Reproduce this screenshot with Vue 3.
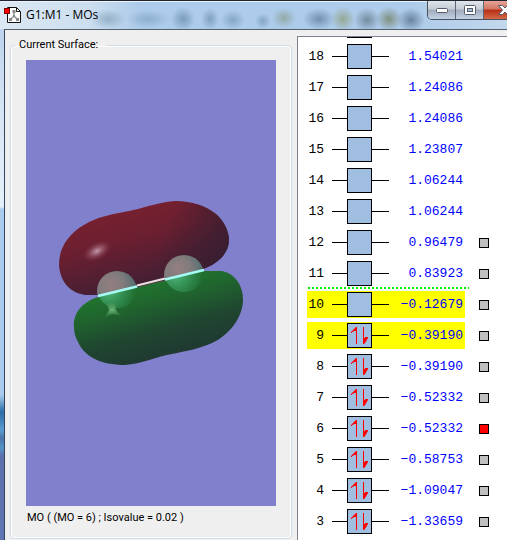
<script setup>
import { ref } from "vue";

const energies = {
  18: "1.54021",
  17: "1.24086",
  16: "1.24086",
  15: "1.23807",
  14: "1.06244",
  13: "1.06244",
  12: "0.96479",
  11: "0.83923",
  10: "−0.12679",
  9: "−0.39190",
  8: "−0.39190",
  7: "−0.52332",
  6: "−0.52332",
  5: "−0.58753",
  4: "−1.09047",
  3: "−1.33659",
};

const HOMO = 9;
const LUMO = 10;

// Highest orbital first
const orbitals = Object.keys(energies)
  .map(Number)
  .sort((a, b) => b - a)
  .map((number) => ({
    number,
    energy: energies[number],
    occupied: number <= HOMO,
    frontier: number === HOMO || number === LUMO,
    hasSurface: number <= 12,
  }));

const surfaces = ref([6]);
</script>

<template>
  <div class="window">
    <header class="title-bar">
      <svg class="app-icon" width="18" height="18" viewBox="0 0 18 18">
        <path d="M3.500 1.500H12.500L16.500 5.500V16.500H3.500Z" fill="#fff" stroke="#111" />
        <path d="M12.500 1.500V5.500H16" fill="none" stroke="#111" />
        <path d="M10 6V10L7 13M10 10L13 13" fill="none" stroke="#999" stroke-width="1.500" />
        <path d="M8.500 4h3v3h-3zM9 9h2v2H9zM5 12h3v3H5zM12 12h3v3h-3z" fill="#888" />
        <rect x="0.500" y="2.500" width="5" height="5" fill="#f00" stroke="#700" />
      </svg>
      <h1>G1:M1 - MOs</h1>
      <div class="window-buttons">
        <button type="button" aria-label="Minimize">
          <svg width="14" height="14" viewBox="0 0 14 14">
            <rect x="1.500" y="5.500" width="11" height="4" rx="1" fill="#fff" stroke="#555b6b" />
          </svg>
        </button>
        <button type="button" aria-label="Maximize">
          <svg width="14" height="14" viewBox="0 0 14 14">
            <rect x="1.500" y="2.500" width="11" height="9" rx="1" fill="#fff" stroke="#555b6b" />
            <rect x="4.500" y="5.500" width="5" height="3" fill="#a9c0da" stroke="#555b6b" />
          </svg>
        </button>
        <button type="button" class="close" aria-label="Close">
          <svg width="14" height="14" viewBox="0 0 14 14">
            <path
              d="M0.500 2.500H4.500L7 5L9.500 2.500H13.500L9.500 7L13.500 11.500H9.500L7 9L4.500 11.500H0.500L4.500 7Z"
              fill="#fff"
              stroke="#555b6b"
            />
          </svg>
        </button>
      </div>
    </header>

    <main class="client">
      <fieldset class="surface">
        <legend>Current Surface:</legend>
        <svg class="viewport" viewBox="26 60 250 446" role="img" aria-label="Molecular orbital 6">
          <defs>
            <linearGradient id="red-lobe" x1="0.200" y1="0.050" x2="0.650" y2="1">
              <stop offset="0" stop-color="#7c2030" />
              <stop offset="0.400" stop-color="#6a1f30" />
              <stop offset="0.750" stop-color="#4c1f33" />
              <stop offset="1" stop-color="#371e30" />
            </linearGradient>
            <linearGradient id="green-lobe" x1="0.250" y1="0.150" x2="0.620" y2="0.900">
              <stop offset="0" stop-color="#20792e" />
              <stop offset="0.300" stop-color="#20652e" />
              <stop offset="0.650" stop-color="#1f4630" />
              <stop offset="1" stop-color="#203832" />
            </linearGradient>
            <linearGradient id="right-shade" x1="0" y1="0.300" x2="1" y2="0.500">
              <stop offset="0.600" stop-color="#371e30" stop-opacity="0" />
              <stop offset="1" stop-color="#371e30" stop-opacity="0.900" />
            </linearGradient>
            <radialGradient id="atom" cx="0.350" cy="0.350" r="0.700">
              <stop offset="0" stop-color="#957f80" />
              <stop offset="0.450" stop-color="#817b7d" />
              <stop offset="0.800" stop-color="#5c7172" />
              <stop offset="1" stop-color="#435052" />
            </radialGradient>
            <radialGradient id="atom-green" cx="0.300" cy="0.550" r="0.650">
              <stop offset="0" stop-color="#4fb97c" />
              <stop offset="0.500" stop-color="#359055" />
              <stop offset="1" stop-color="#217032" />
            </radialGradient>
            <radialGradient id="shine">
              <stop offset="0" stop-color="#c59aac" />
              <stop offset="0.400" stop-color="#a16678" stop-opacity="0.700" />
              <stop offset="1" stop-color="#7c3040" stop-opacity="0" />
            </radialGradient>
            <radialGradient id="green-shine" cx="0.450" cy="0.450" r="0.600">
              <stop offset="0" stop-color="#6fb67a" />
              <stop offset="1" stop-color="#3f8a4a" stop-opacity="0.200" />
            </radialGradient>
            <clipPath id="above">
              <path d="M26 60H276V254L26 313Z" />
            </clipPath>
            <clipPath id="below">
              <path d="M26 313L276 254V506H26Z" />
            </clipPath>
          </defs>

          <rect x="26" y="60" width="250" height="446" fill="#8080cc" />
          <path
            v-for="fill in ['red-lobe', 'right-shade']"
            :key="fill"
            d="M59 265C59 242 76 225 102 217C115 213 126 212 138 209C151 205 163 202 175 201C192 201 206 206 216 214C224 221 229 231 229 240C229 253 218 264 203 269L98 295H85C68 292 60 280 59 265Z"
            :fill="`url(#${fill})`"
          />
          <ellipse cx="97" cy="251" rx="16" ry="9" fill="url(#shine)" transform="rotate(-28 97 251)" />
          <path
            d="M98 297L203 271H222C236 274 243 286 243 300C243 318 228 336 212 343C199 349 186 351 172 354C155 357 142 364 125 365C100 365 84 356 78 342C75 337 74 332 74 327C73 312 83 302 98 297Z"
            fill="url(#green-lobe)"
          />
          <g clip-path="url(#above)">
            <circle cx="117" cy="291" r="20" fill="url(#atom)" />
            <circle cx="184" cy="275" r="20" fill="url(#atom)" />
          </g>
          <g clip-path="url(#below)">
            <circle cx="117" cy="288" r="20" fill="url(#atom-green)" />
            <circle cx="184" cy="272" r="20" fill="url(#atom-green)" />
          </g>
          <path d="M106 303H115L116 310L122 316L112 314L104 318L109 310Z" fill="url(#green-shine)" />
          <path d="M137 286L165 279" stroke="#4b3438" stroke-width="3" />
          <path d="M137 285.500L165 278.500" stroke="#e9dfe0" stroke-width="2" />
          <path d="M98 296L137 286.500M165 279.500L204 270" stroke="#a5fbf3" stroke-width="2.500" />
        </svg>
        <p>MO ( (MO = 6) ; Isovalue = 0.02 )</p>
      </fieldset>

      <section class="orbitals" aria-label="Orbital energies">
        <ul>
          <!-- Bottom edge of the level that is scrolled out of view -->
          <li class="scrolled" aria-hidden="true"><span class="box"></span></li>
          <li v-for="mo in orbitals" :key="mo.number" :class="{ gap: mo.number === LUMO + 1 }">
            <label :class="['level', { frontier: mo.frontier }]" :for="`mo-${mo.number}`">
              <span class="number">{{ mo.number }}</span>
              <span class="line left"></span>
              <span class="box">
                <svg v-if="mo.occupied" width="23" height="23" viewBox="0 0 23 23">
                  <g fill="#f00">
                    <path d="M8 3h1v17H8zM3 9V8L8 3H9V6L8 7H6L5 8H4V9Z" />
                    <path d="M15 3h1v17h-1zM16 14h1v-1h3v1L17 19L16 20H15V14Z" />
                  </g>
                </svg>
              </span>
              <span class="line right"></span>
              <span class="energy">{{ mo.energy }}</span>
            </label>
            <input
              v-if="mo.hasSurface"
              :id="`mo-${mo.number}`"
              v-model="surfaces"
              type="checkbox"
              :value="mo.number"
            />
          </li>
        </ul>
      </section>
    </main>
  </div>
</template>

<style>
body {
  margin: 0;
  background: #efefef;
}
</style>

<style scoped>
.window {
  box-sizing: border-box;
  min-height: 100vh;
  display: flex;
  flex-direction: column;
  padding-left: 4px;
  overflow: hidden;
  background: linear-gradient(
    #b3cde9 0,
    #d4e3f3 100px,
    #e6f0fa 207px,
    #a9cbed 209px,
    #a9cbed 395px,
    #2a6ea8 412px,
    #5a9bd2 430px,
    #4a76a8 438px,
    #5293c9 448px,
    #5b6fab 456px,
    #6076b4 100%
  );
  color: #000;
  font-family: Roboto, "Liberation Sans", sans-serif;
  font-size: 11px;
}

.title-bar {
  box-sizing: border-box;
  height: 29px;
  flex: none;
  display: flex;
  align-items: center;
  gap: 4px;
  margin-left: -4px;
  padding-left: 4px;
  border-top: 1px solid #22252e;
  box-shadow: inset 0 1px #e9f3fd;
  background:
    radial-gradient(ellipse 12px 12px at 183px 18px, #5b7da099, transparent),
    radial-gradient(ellipse 9px 11px at 210px 18px, #5b7da088, transparent),
    radial-gradient(ellipse 12px 10px at 233px 19px, #5b7da077, transparent),
    radial-gradient(ellipse 8px 8px at 263px 20px, #5b7da077, transparent),
    radial-gradient(ellipse 12px 10px at 284px 17px, #7f957a99, transparent),
    radial-gradient(ellipse 16px 11px at 319px 18px, #4b6b8a99, transparent),
    radial-gradient(ellipse 12px 12px at 343px 18px, #8a9668aa, transparent),
    radial-gradient(ellipse 13px 12px at 367px 19px, #566d7aaa, transparent),
    radial-gradient(ellipse 13px 12px at 389px 18px, #69724caa, transparent),
    radial-gradient(ellipse 14px 12px at 411px 19px, #45607aaa, transparent),
    radial-gradient(ellipse 18px 10px at 108px 18px, #7390aa88, transparent),
    radial-gradient(ellipse 22px 9px at 148px 18px, #7396b588, transparent),
    linear-gradient(90deg, #dce8f3 0, #cbdeef 90px, #adcbea 140px, #adcbea 410px, #c2d8ed 100%);
}

.app-icon {
  flex: none;
}

h1 {
  flex: 1;
  margin: 0;
  font-family: "Open Sans", "Noto Sans", sans-serif;
  font-size: 12px;
  font-weight: 400;
  line-height: 18px;
  white-space: nowrap;
}

.window-buttons {
  display: flex;
  align-self: flex-start;
  margin-right: -20px;
  border: 1px solid #4a505c;
  border-top: 0;
  border-radius: 0 0 5px 5px;
  overflow: hidden;
}

.window-buttons button {
  box-sizing: border-box;
  width: 28px;
  height: 18px;
  display: grid;
  place-items: center;
  padding: 0;
  border: 0;
  border-right: 1px solid #5d6676;
  background: linear-gradient(#e1e5eb, #c5ccd6 45%, #a0abbb 50%, #c2d2e4);
}

.window-buttons .close {
  width: 42px;
  border-right: 0;
  background: linear-gradient(#e5a497, #d37563 45%, #b92e15 50%, #d26a48);
}

.client {
  box-sizing: border-box;
  flex: 1;
  min-height: 0;
  display: flex;
  gap: 5px;
  padding: 6px 0 0 5px;
  border-top: 1px solid #56616e;
  border-left: 1px solid #30445e;
  background: #efefef;
}

.surface {
  box-sizing: border-box;
  flex: 0 1 282px;
  min-width: 0;
  align-self: flex-start;
  margin: 2px 0 0;
  padding: 8px 15px 13px;
  border: 1px solid #d1dde7;
  border-radius: 4px;
  box-shadow: inset 0 0 0 1px #fff;
}

legend {
  margin-left: -10px;
  padding: 0 9px 0 3px;
  line-height: 14px;
}

.viewport {
  display: block;
  width: 100%;
}

.surface p {
  margin: 5px 0 0 1px;
  line-height: 14px;
}

.orbitals {
  flex: 1 0 200px;
  overflow: hidden;
  border-top: 1px solid #7b828d;
  border-left: 1px solid #7b828d;
  background: #fff;
  font-family: "Liberation Mono", "Courier New", monospace;
  font-size: 13px;
}

.orbitals ul {
  margin: -27px 0 0;
  padding: 0 0 0 9px;
  list-style: none;
}

.orbitals li {
  box-sizing: border-box;
  height: 31px;
  display: flex;
  align-items: center;
  gap: 14px;
}

.orbitals li.scrolled {
  padding-left: 40px;
}

.orbitals li.gap {
  background: repeating-linear-gradient(90deg, #00f000 0 2px, transparent 2px 4px) 1px 100% / 161px 2px no-repeat;
}

.level {
  box-sizing: border-box;
  width: 158px;
  height: 27px;
  display: flex;
  align-items: center;
  padding-right: 2px;
}

.frontier {
  background: #ff0;
}

.number {
  width: 17px;
  text-align: right;
}

.line {
  height: 1px;
  background: #000;
}

.line.left {
  width: 15px;
  margin-left: 8px;
}

.line.right {
  width: 17px;
}

.box {
  box-sizing: border-box;
  width: 25px;
  height: 25px;
  border: 1px solid #000;
  background: #a0bee0;
}

.box svg {
  display: block;
}

.energy {
  flex: 1;
  color: #00f;
  text-align: right;
}

input {
  appearance: none;
  box-sizing: border-box;
  width: 10px;
  height: 10px;
  margin: 0;
  border: 1px solid #000;
  background: #c0c0c0;
}

input:checked {
  background: #f00;
}
</style>
